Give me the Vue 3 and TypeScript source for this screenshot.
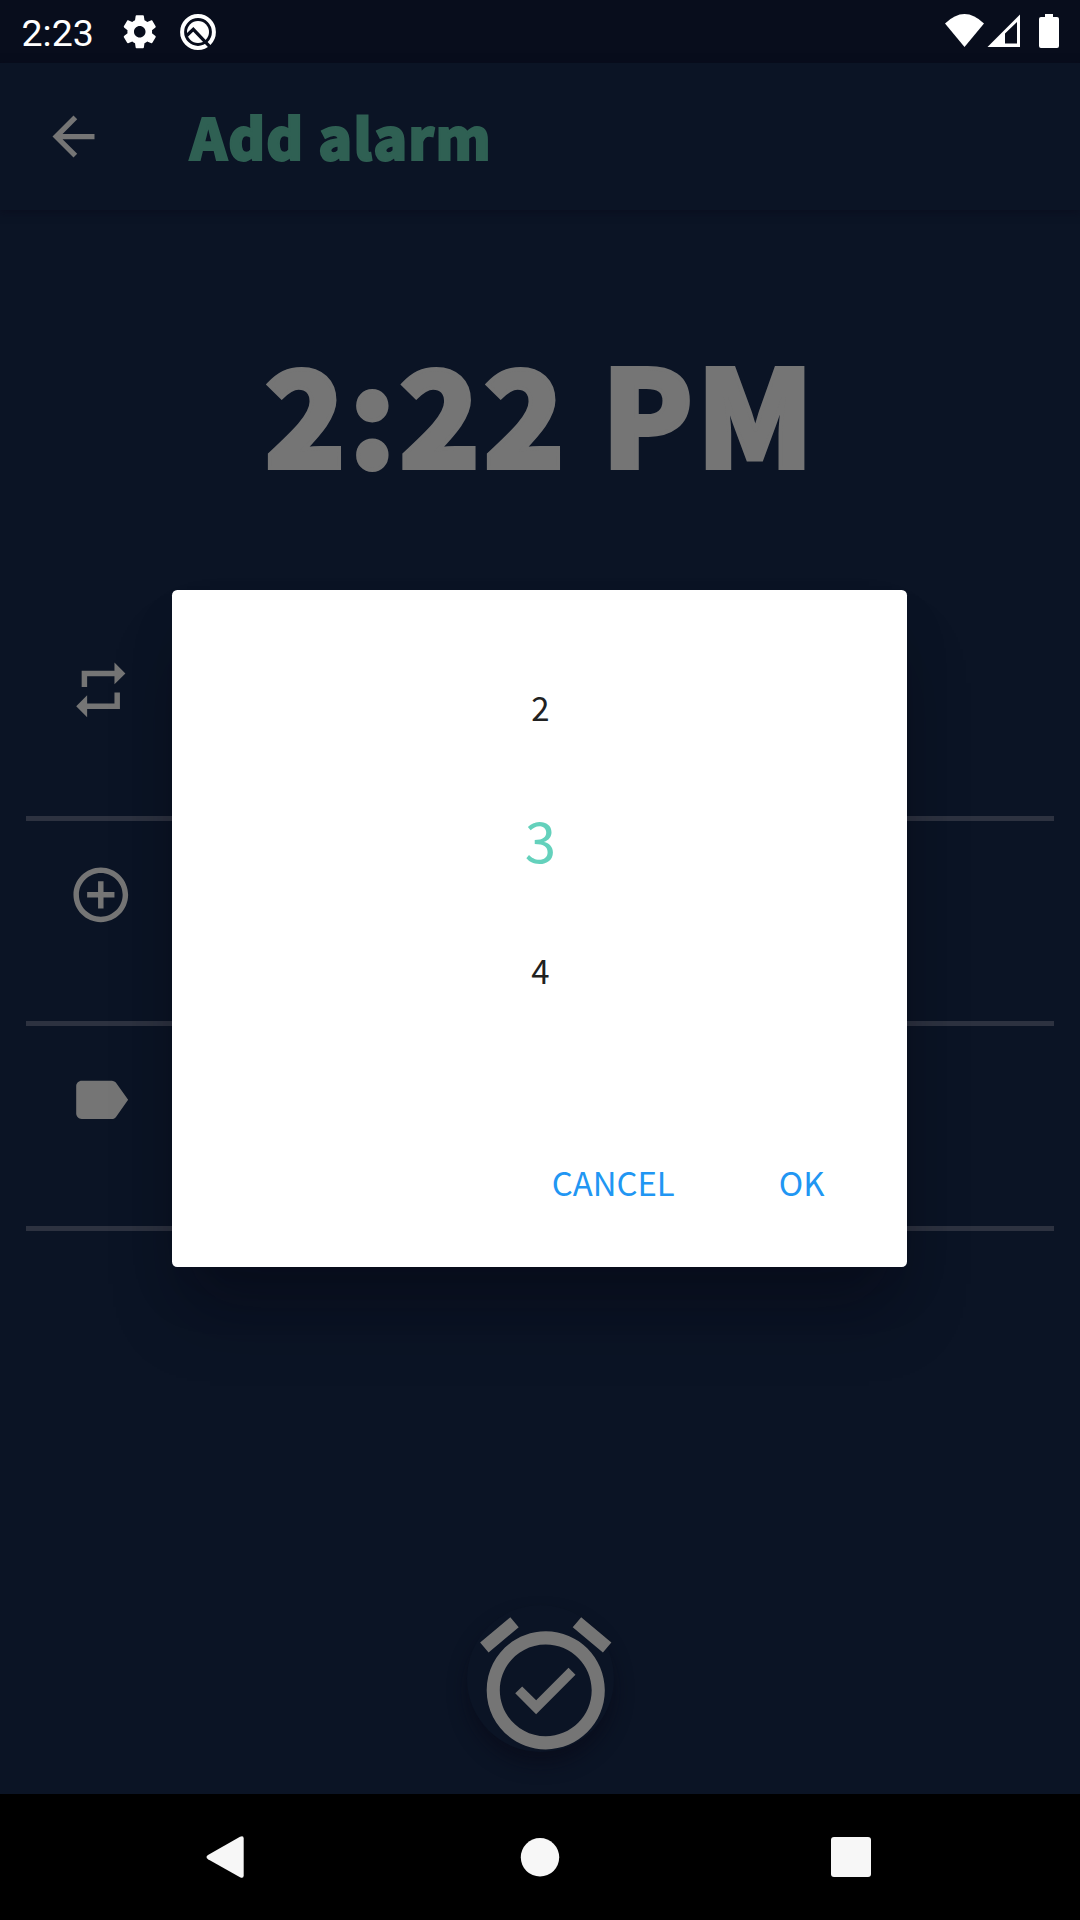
<script setup lang="ts">
interface Row {
  name: string
  path: string
}

const rows: Row[] = [
  { name: 'repeat', path: 'M7 7h10v3l4-4-4-4v3H5v6h2V7zm10 10H7v-3l-4 4 4 4v-3h12v-6h-2v4z' },
  {
    name: 'add',
    path: 'M13 7h-2v4H7v2h4v4h2v-4h4v-2h-4V7zm-1-5C6.48 2 2 6.48 2 12s4.48 10 10 10 10-4.48 10-10S17.52 2 12 2zm0 18c-4.41 0-8-3.59-8-8s3.59-8 8-8 8 3.59 8 8-3.59 8-8 8z',
  },
  {
    name: 'label',
    path: 'M17.63 5.84C17.27 5.33 16.67 5 16 5L5 5.01C3.9 5.01 3 5.9 3 7v10c0 1.1.9 1.99 2 1.99L16 19c.67 0 1.27-.33 1.63-.84L22 12l-4.37-6.16z',
  },
]

const values: number[] = [2, 3, 4]
const selected = 3
</script>

<template>
  <div class="screen">
    <header class="status">
      <span class="time">2:23</span>
      <svg class="gear" viewBox="0 0 24 24">
        <path d="M19.43 12.98c.04-.32.07-.64.07-.98s-.03-.66-.07-.98l2.11-1.65c.19-.15.24-.42.12-.64l-2-3.46c-.12-.22-.39-.3-.61-.22l-2.49 1c-.52-.4-1.08-.73-1.69-.98l-.38-2.65C14.46 2.18 14.25 2 14 2h-4c-.25 0-.46.18-.49.42l-.38 2.65c-.61.25-1.17.59-1.69.98l-2.49-1c-.23-.09-.49 0-.61.22l-2 3.46c-.13.22-.07.49.12.64l2.11 1.65c-.04.32-.07.65-.07.98s.03.66.07.98l-2.11 1.65c-.19.15-.24.42-.12.64l2 3.46c.12.22.39.3.61.22l2.49-1c.52.4 1.08.73 1.69.98l.38 2.65c.03.24.24.42.49.42h4c.25 0 .46-.18.49-.42l.38-2.65c.61-.25 1.17-.59 1.69-.98l2.49 1c.23.09.49 0 .61-.22l2-3.46c.12-.22.07-.49-.12-.64l-2.11-1.65zM12 15.5c-1.93 0-3.5-1.57-3.5-3.5s1.57-3.5 3.5-3.5 3.5 1.57 3.5 3.5-1.57 3.5-3.5 3.5z" />
      </svg>
      <svg class="badge" viewBox="0 0 38 38">
        <circle cx="19" cy="19" r="15.900" fill="none" stroke="#fff" stroke-width="4" />
        <circle cx="19" cy="19" r="11" />
        <path d="M7.800 22.500L14.300 16.300L31.500 34.300" fill="none" stroke="#080d1c" stroke-width="3.200" />
      </svg>
      <svg class="indicators" viewBox="0 0 120 36">
        <path d="M0 9.5Q19.5-9.5 39 9.5L19.5 33z" />
        <path fill-rule="evenodd" d="M42.5 33L75 .5V33zM60 19.5V29.5H72V8z" />
        <path d="M100 0h8v3h4q2 0 2 2v27q0 2-2 2h-16q-2 0-2-2V5q0-2 2-2h4z" />
      </svg>
    </header>

    <div class="appbar">
      <svg class="back" viewBox="0 0 24 24">
        <path d="M20 11H7.83l5.59-5.59L12 4l-8 8 8 8 1.41-1.41L7.83 13H20v-2z" />
      </svg>
      <h1>Add alarm</h1>
    </div>

    <main>
      <div class="clock">2:22 PM</div>
      <div v-for="row in rows" :key="row.name" class="row">
        <svg viewBox="0 0 24 24"><path :d="row.path" /></svg>
      </div>
      <div class="save">
        <div class="fab">
          <svg viewBox="0 0 24 24">
            <path d="M22 5.72l-4.6-3.86-1.29 1.53 4.6 3.86L22 5.72zM7.88 3.39L6.6 1.86 2 5.71l1.29 1.53 4.59-3.85zM12 4c-4.97 0-9 4.03-9 9s4.02 9 9 9c4.97 0 9-4.03 9-9s-4.03-9-9-9zm0 16c-3.87 0-7-3.13-7-7s3.13-7 7-7 7 3.13 7 7-3.13 7-7 7zm-1.46-5.47L8.41 12.4l-1.06 1.06 3.18 3.18 6-6-1.06-1.06-4.93 4.95z" />
          </svg>
        </div>
      </div>
    </main>

    <nav>
      <svg viewBox="0 0 1080 126">
        <path d="M208 61L240 42.700Q243.700 41 243.700 44.500V81.500Q243.700 85 240 83.300L208 65.300Q205 63.100 208 61z" />
        <circle cx="540" cy="63.300" r="19.200" />
        <rect x="831" y="43" width="40" height="40" rx="3" />
      </svg>
    </nav>

    <div class="dialog">
      <div class="picker">
        <div v-for="v in values" :key="v" class="value" :class="{ on: v === selected }">{{ v }}</div>
      </div>
      <div class="actions">
        <button class="cancel">CANCEL</button>
        <button class="ok">OK</button>
      </div>
    </div>
  </div>
</template>

<style>
body {
  margin: 0;
  background: #0b1425;
}
</style>

<style scoped>
.screen {
  position: relative;
  display: flex;
  flex-direction: column;
  width: 1080px;
  height: 1920px;
  overflow: hidden;
  background: #0b1425;
  fill: #757575;
  font-family: 'Noto Sans CJK JP', 'Noto Sans CJK SC', sans-serif;
}
svg {
  display: block;
  flex: none;
}
.status {
  display: flex;
  align-items: center;
  height: 63px;
  background: #080d1c;
  fill: #fff;
}
.time {
  width: 98.500px;
  padding-top: 2px;
  padding-left: 21.500px;
  color: #fff;
  font: 37.500px/64px Roboto, sans-serif;
}
.gear {
  width: 39.500px;
  height: 39.500px;
}
.badge {
  width: 38px;
  height: 38px;
  margin-left: 19.500px;
}
.indicators {
  width: 120px;
  height: 36px;
  margin-left: auto;
  margin-right: 15px;
}
.appbar {
  display: flex;
  align-items: center;
  height: 147px;
  box-shadow: 0 2px 8px rgba(10, 8, 24, 0.5);
}
.back {
  width: 63px;
  height: 63px;
  margin-left: 42px;
}
h1 {
  margin: -2px 0 0 85px;
  color: #2f6053;
  font-size: 56px;
  font-weight: 900;
  letter-spacing: 1.200px;
  line-height: 80px;
  white-space: nowrap;
  -webkit-text-stroke: 2px #2f6053;
}
main {
  display: flex;
  flex-direction: column;
  height: 1584px;
}
.clock {
  height: 203px;
  margin-top: 98px;
  margin-bottom: 105px;
  padding-left: 1px;
  color: #757575;
  font-size: 134px;
  font-weight: 900;
  letter-spacing: 2.900px;
  line-height: 205px;
  text-align: center;
  white-space: nowrap;
  -webkit-text-stroke: 4px #757575;
}
.row {
  box-sizing: border-box;
  height: 205px;
  margin: 0 26px;
  padding: 41.300px 0 0 42.300px;
  border-bottom: 5.250px solid #2d3240;
}
.row svg {
  width: 65.600px;
  height: 65.600px;
}
.save {
  display: flex;
  justify-content: center;
  padding-top: 374px;
}
.fab {
  width: 147px;
  height: 147px;
  border-radius: 50%;
  background: #0b1425;
  box-shadow: 0 12px 18px rgba(8, 8, 22, 0.5);
}
.fab svg {
  width: 157.500px;
  height: 157.500px;
}
nav {
  height: 126px;
  background: #000;
  fill: #f7f7f7;
}
nav svg {
  width: 1080px;
  height: 126px;
}
.dialog {
  position: absolute;
  top: 589.800px;
  left: 172.400px;
  box-sizing: border-box;
  width: 735px;
  height: 677.200px;
  padding-top: 51.500px;
  border-radius: 5.250px;
  background: #fff;
  box-shadow:
    0 55px 65px -15px rgba(6, 6, 16, 0.35),
    0 28px 50px -12px rgba(6, 6, 16, 0.2);
}
.value {
  height: 131.250px;
  padding-left: 1px;
  color: #212121;
  font-size: 32.900px;
  line-height: 131.250px;
  text-align: center;
}
.value.on {
  color: #64d1bc;
  font-size: 56.400px;
}
.actions {
  display: flex;
  justify-content: flex-end;
  gap: 104px;
  margin-top: 115px;
  padding-right: 83px;
}
button {
  padding: 0;
  border: 0;
  background: none;
  color: #2196f3;
  font: inherit;
  font-size: 32.900px;
  line-height: 64px;
}
</style>
